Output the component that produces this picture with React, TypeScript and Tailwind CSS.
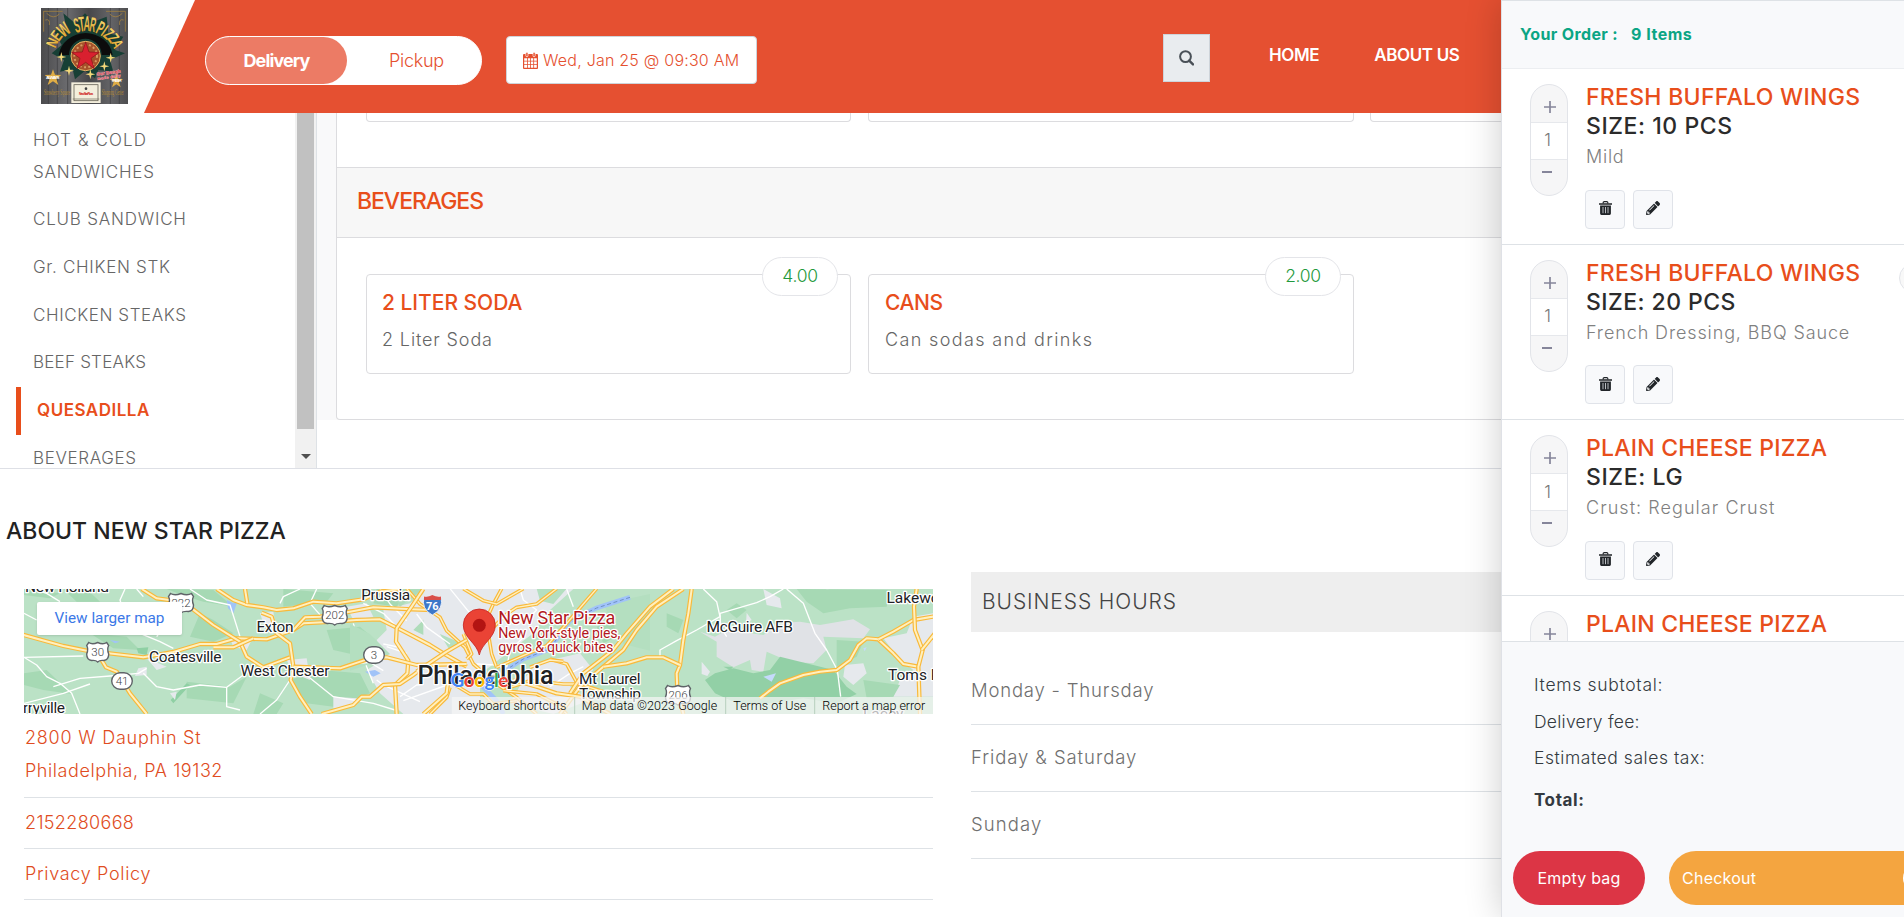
import { FaPencilAlt } from "react-icons/fa";

type RoadProps = { d: string; w?: number };

const WEST_HIGHWAYS = [
  "M60,192 L190,228 L260,242 L430,262 L520,246 L600,222 L650,222 L710,205 L800,208 L880,180 L910,160 L1000,155 L1070,150 L1140,148 L1200,178 L1290,225 L1330,250 L1400,290",
  "M425,57 L470,85 L545,95 L575,115 L640,165 L720,215",
  "M720,215 L740,260 L790,292 L870,262",
  "M650,57 L700,90 L740,105 L790,112 L830,120 L880,115 L940,95 L1010,100 L1090,88 L1140,65 L1200,57",
  "M785,128 L815,140 L830,190 L870,220 L880,290 L872,330 L900,380 L935,432",
  "M735,57 L742,100",
  "M300,262 L318,292 L350,305 L365,330 L390,370 L440,432",
  "M880,180 L915,142 L960,140 L1050,125 L1120,112 L1235,118 L1300,120",
  "M1270,57 L1235,110 L1190,175 L1188,215 L1225,272 L1222,310 L1185,345 L1190,432",
  "M965,432 L1060,405 L1085,380 L1110,380 L1150,345 L1200,342 L1240,315 L1260,300",
  "M880,290 L1020,295 L1110,265 L1160,262 L1250,285 L1400,282",
  "M1250,305 L1340,245 L1400,210",
  "M1345,330 L1340,370 L1270,432",
  "M640,232 L700,232 L760,205",
];
const CITY_HIGHWAYS = [
  "M170,14 L210,60 L270,100 L290,140 L345,190 L370,240 L440,300 L500,340 L560,390",
  "M340,150 L365,210 L350,225",
  "M455,14 L430,60 L412,100 L415,150 L425,210 L440,250",
  "M340,14 L400,50 L440,60 L520,14",
  "M440,250 L520,215 L590,185 L640,130 L700,60 L740,14",
  "M620,14 L560,60 L500,70 L470,90 L430,130",
  "M600,225 L650,240 L680,295 L720,310 L780,330",
  "M480,310 L540,290 L640,300 L690,300",
  "M460,320 L560,330 L620,360 L650,390",
  "M310,300 L360,330 L400,330 L430,360 L500,350",
  "M240,390 L290,340 L300,310",
  "M540,250 L600,228 L640,232",
];
const EAST_HIGHWAYS = [
  "M640,57 L560,110 L500,180 L460,240 L400,290 L330,350 L270,432",
  "M610,57 L540,110 L470,190 L430,240 L340,310 L300,370",
  "M665,57 L655,130 L640,210 L630,285 L620,310 L622,360 L640,432",
  "M400,290 L470,280 L530,262 L580,262 L630,285",
  "M870,385 L895,365 L930,340 L1000,315 L1050,305 L1100,300 L1140,270 L1165,225 L1190,205 L1225,208 L1270,250 L1300,282 L1345,290",
  "M1225,208 L1270,185 L1330,150 L1400,138",
  "M1340,57 L1332,110 L1335,180 L1358,240 L1345,290 L1350,432",
  "M1355,240 L1395,190",
  "M130,330 L200,350 L260,370 L330,380 L420,432",
];
const WEST_STREETS = [
  "M72,262 L250,258", "M72,262 L110,285 L140,320 L180,340 L215,370 L240,432", "M72,400 L190,370 L270,342",
  "M160,350 L240,325 L330,318 L415,310 L440,295", "M375,57 L360,90 L372,130 L420,190 L480,215 L520,235",
  "M545,120 L500,160 L470,200", "M430,310 L470,350 L520,360 L600,345 L680,352 L730,315",
  "M680,352 L680,410 L720,420", "M570,57 L620,90 L690,105 L720,200", "M780,432 L830,390 L870,330",
  "M900,300 L1000,380 L1120,400 L1185,420", "M840,100 L850,80 L900,57", "M950,57 L930,100 L965,140",
  "M1060,160 L1080,230 L1100,290 L1120,340", "M1130,330 L1150,345 L1260,395", "M1160,230 L1220,250", "M1200,380 L1250,345 L1400,330",
  "M100,57 L140,70 L180,95", "M72,130 L110,150", "M410,57 L430,80", "M1090,100 L1150,130 L1190,170",
];
const EAST_STREETS = [
  "M700,57 L740,95 L750,140 L680,180 L620,212 L570,240 L570,262", "M750,130 L860,98 L900,80 L940,57",
  "M950,57 L1000,100 L1035,190 L1070,240 L1102,300 L1112,380", "M750,130 L752,170 L770,200",
  "M150,57 L160,90 L200,120 L180,140", "M240,350 L300,310 L340,290", "M290,57 L310,110",
];
const CITY_STREETS = [
  "M90,14 L120,60 L170,110", "M200,90 L230,130 L300,180", "M160,350 L300,300", "M0,240 L60,235 L100,260",
  "M380,240 L470,245", "M100,180 L150,190", "M300,14 L370,100", "M520,160 L480,200 L470,250",
];

function Highway({ d, w = 10 }: RoadProps) {
  return (
    <g fill="none" strokeLinejoin="round">
      <path d={d} stroke="#f9b93a" strokeWidth={w + 1} />
      <path d={d} stroke="#fff0bf" strokeWidth={w - 6} />
    </g>
  );
}
function Street({ d }: RoadProps) {
  return <path d={d} fill="none" stroke="#fff" strokeWidth={4} strokeLinejoin="round" />;
}

type LabelProps = { x: number; y: number; len?: number; size?: number; color?: string; weight?: number; children: string };
function MapLabel({ x, y, len, size = 15.5, color = "#202124", weight = 400, children }: LabelProps) {
  return (
    <text x={x} y={y} textLength={len} fontSize={size} fill={color} fontWeight={weight} stroke="#fff" strokeWidth={2.6} strokeLinejoin="round" paintOrder="stroke">
      {children}
    </text>
  );
}
function UsShield({ x, y, n }: { x: number; y: number; n: string }) {
  const w = n.length > 2 ? 12.5 : 11;
  return (
    <g transform={`translate(${x} ${y})`}>
      <path
        d={`M${-w + 2},-9.5 Q${-w / 2},-7 0,-9.5 Q${w / 2},-7 ${w - 2},-9.5 L${w},-6.5 Q${w - 2},-3 ${w},2 Q${w},8 ${w - 5},8.5 Q2,8 0,10 Q-2,8 ${-w + 5},8.5 Q${-w},8 ${-w},2 Q${-w + 2},-3 ${-w},-6.5 Z`}
        fill="#fff" stroke="#5f6368" strokeWidth="1.4"
      />
      <text y="4.3" textAnchor="middle" fontSize="11.5" fill="#3c4043">{n}</text>
    </g>
  );
}
function RoundShield({ x, y, n }: { x: number; y: number; n: string }) {
  return (
    <g transform={`translate(${x} ${y})`}>
      <rect x="-10.3" y="-8.3" width="20.6" height="16.6" rx="8.3" fill="#fff" stroke="#5f6368" strokeWidth="1.4" />
      <text y="4.2" textAnchor="middle" fontSize="11.5" fill="#3c4043">{n}</text>
    </g>
  );
}

function MapView() {
  return (
    <svg width="909" height="125" viewBox="0 0 909 125" className="block font-['Roboto',sans-serif]">
      <rect width="909" height="125" fill="#bbe2c6" />
      <g transform="translate(-24 -19) scale(.33333)">
        <g fill="#a6d9b4">
          <path d="M72,57 L180,70 L150,85 L72,75 Z M190,57 L260,57 L300,95 L230,95 Z M570,200 L600,130 L640,150 L700,190 L640,215 Z M500,57 L640,60 L700,110 L610,95 L560,80 Z" />
          <path d="M72,310 L140,300 L215,372 L130,360 L72,345 Z M560,335 L690,350 L740,320 L700,400 L560,385 Z M850,57 L1000,70 L980,95 L850,110 Z M980,180 L1080,170 L1150,230 L1090,260 L1000,240 Z" />
          <path d="M870,330 L960,300 L1080,310 L1110,370 L1000,410 L920,400 Z M1130,57 L1230,57 L1190,110 L1120,100 Z M1230,170 L1290,130 L1330,175 L1290,200 Z M780,370 L850,400 L830,432 L760,432 Z M270,190 L380,200 L420,240 L340,235 Z" />
        </g>
        <path d="M410,235 L445,232 L440,255 L415,250 Z M560,340 L570,345 L520,400 L512,390 Z" fill="#8fd0a4" />
        <g fill="#e6e9ed">
          <path d="M1150,120 L1230,100 L1290,57 L1440,57 L1440,432 L1210,432 L1140,370 L1100,300 L1150,270 L1130,210 L1160,180 Z" />
          <path d="M690,205 L760,200 L740,240 L700,230 Z M415,295 L440,290 L440,315 L405,318 Z M440,265 L500,290 L470,300 Z M860,270 L920,265 L930,330 L880,310 Z M1040,110 L1100,100 L1120,140 L1060,150 Z M780,130 L820,125 L830,190 L790,160 Z M510,370 L530,365 L525,390 Z M1000,380 L1070,385 L1060,410 L1000,415 Z" />
        </g>
        <path d="M680,90 L700,100 L712,95 L700,130 L684,115 Z M1095,305 L1125,300 L1142,310 L1120,320 Z M330,210 L360,215 L345,220 Z" fill="#a0c3f8" />
        <path d="M1240,180 L1290,130 L1330,170 L1290,205 Z M1170,57 L1270,57 L1200,110 Z" fill="#aedcba" />
        {WEST_STREETS.map((d) => <Street key={d} d={d} />)}
      </g>
      <g transform="translate(446 -19) scale(.33333)">
        <g fill="#e6e9ed">
          <path d="M-140,57 L310,57 L240,120 L190,190 L110,250 L60,290 L0,330 L-60,432 L-140,432 Z" />
          <path d="M200,280 L330,250 L370,300 L300,350 L360,390 L250,432 L120,400 L160,330 Z M160,57 L230,57 L215,140 L160,110 Z" />
          <path d="M880,57 L930,85 L935,115 L890,105 Z M830,128 L845,150 L828,160 Z M1070,57 L1130,75 L1060,90 Z M1125,285 L1180,280 L1190,310 L1150,345 L1120,320 Z M695,275 L720,305 L712,318 L695,312 Z" />
          <path d="M1389,130 L1330,140 L1310,190 L1240,205 L1290,270 L1330,300 L1290,330 L1270,380 L1389,380 Z" />
        </g>
        <path d="M690,185 L735,200 L770,180 L880,195 L940,158 L990,155 L1050,165 L1150,148 L1200,178 L1180,205 L1060,200 L1070,240 L1030,280 L960,275 L890,245 L880,305 L845,300 L840,270 L790,292 L740,260 L740,215 Z" fill="#e0e2e6" />
        <g fill="#a6d9b4">
          <path d="M980,57 L1260,60 L1250,110 L1140,115 L1060,130 L1010,95 Z M590,130 L640,150 L625,190 L590,170 Z M380,170 L430,150 L440,200 L400,220 Z M770,120 L800,100 L830,120 L800,145 Z" />
          <path d="M1100,210 L1180,215 L1160,260 L1100,290 Z" />
        </g>
        <path d="M735,310 L790,295 L850,310 L900,300 L930,260 L1030,285 L1090,300 L1130,350 L1160,372 L1100,400 L1000,385 L900,400 L800,400 L735,370 L705,330 Z M760,290 L790,290 L780,300 Z" fill="#92d0a6" />
        <path d="M1180,330 L1290,345 L1270,380 L1190,385 Z" fill="#a6d9b4" />
        <path d="M880,320 L918,310 L905,335 Z M1180,235 L1190,232 L1184,244 Z" fill="#c5dafb" />
        {EAST_STREETS.map((d) => <Street key={d} d={d} />)}
      </g>
      <g transform="translate(326 -5) scale(.33333)">
        <path d="M0,14 L60,14 L30,40 L0,50 Z M0,120 L60,150 L120,210 L60,240 L0,260 Z M270,150 L340,180 L300,200 Z M560,14 L650,14 L610,60 L570,50 Z M760,60 L900,30 L900,200 L820,180 Z" fill="#b4dfc0" />
        <path d="M840,40 L740,72 L660,110 L630,150 L600,195 L520,225 L480,250 L450,260 M380,260 L400,310 L440,350 L460,390" fill="none" stroke="#a0c3f8" strokeWidth="14" />
        <path d="M840,40 L740,72 L660,110 L630,150 L600,195 L520,225 L480,250" fill="none" stroke="#6e8fc4" strokeWidth="3" strokeDasharray="12 8" />
        {CITY_STREETS.map((d) => <Street key={d} d={d} />)}
        {CITY_HIGHWAYS.map((d) => <Highway key={d} d={d} />)}
      </g>
      <g transform="translate(-24 -19) scale(.33333)">{WEST_HIGHWAYS.map((d) => <Highway key={d} d={d} w={12} />)}</g>
      <g transform="translate(446 -19) scale(.33333)">{EAST_HIGHWAYS.map((d) => <Highway key={d} d={d} w={12} />)}</g>

      <MapLabel x={1} y={2.7} len={84}>New Holland</MapLabel>
      <MapLabel x={337.2} y={11} len={49}>Prussia</MapLabel>
      <MapLabel x={232.5} y={43.2} len={37}>Exton</MapLabel>
      <MapLabel x={125} y={73} len={72.5}>Coatesville</MapLabel>
      <MapLabel x={216.5} y={86.5} len={89}>West Chester</MapLabel>
      <MapLabel x={-1} y={124} len={42}>rryville</MapLabel>
      <MapLabel x={682.5} y={42.5} len={86.5}>McGuire AFB</MapLabel>
      <MapLabel x={555} y={95} len={61.5}>Mt Laurel</MapLabel>
      <MapLabel x={555} y={110} len={62}>Township</MapLabel>
      <MapLabel x={862.5} y={14.4}>Lakewood</MapLabel>
      <MapLabel x={864} y={90.7}>Toms River</MapLabel>
      <MapLabel x={839} y={130}>Lacey</MapLabel>
      <MapLabel x={393.5} y={94.7} len={136} size={25} weight={500}>Philadelphia</MapLabel>
      <UsShield x={157} y={14} n="222" />
      <UsShield x={73.7} y={63} n="30" />
      <UsShield x={310.7} y={26} n="202" />
      <UsShield x={654} y={106} n="206" />
      <RoundShield x={98} y={92} n="41" />
      <RoundShield x={350} y={66} n="3" />
      <path d="M400,8 Q404,9 408.3,6.5 Q413,9 417,8 Q420,20 408.3,26 Q397,20 400,8 Z" fill="#3d78c9" stroke="#fff" strokeWidth=".8" />
      <path d="M400,11 V7.5 Q404,8.5 408.3,6 Q413,8.5 417,7.5 V11 Z" fill="#d9504a" />
      <text x="408.3" y="21" textAnchor="middle" fontSize="11" fontWeight="700" fill="#fff">76</text>

      <path d="M455.3,66 C453,54 439.3,49 439.3,36 A16,16 0 0 1 471.3,36 C471.3,49 457.6,54 455.3,66 Z" fill="#ea4335" stroke="#c5221f" strokeWidth=".8" />
      <circle cx="455.3" cy="36.3" r="6.5" fill="#b31412" />
      <MapLabel x={474.3} y={35} len={117} size={18} color="#b3181d">New Star Pizza</MapLabel>
      <MapLabel x={474.3} y={49.4} len={122} size={14.3} color="#b3181d">New York-style pies,</MapLabel>
      <MapLabel x={474.3} y={63.4} len={115} size={14.3} color="#b3181d">gyros &amp; quick bites</MapLabel>
      <text x="426.5" y="97.5" textLength="58" fontSize="19" fontWeight="700" stroke="#fff" strokeWidth="1.2" paintOrder="stroke" className="font-['Lato',sans-serif]">
        <tspan fill="#4285f4">G</tspan><tspan fill="#ea4335">o</tspan><tspan fill="#fbbc04">o</tspan><tspan fill="#4285f4">g</tspan><tspan fill="#34a853">l</tspan><tspan fill="#ea4335">e</tspan>
      </text>

      <rect x="427.7" y="108" width="482" height="17" fill="#f5f5f5" fillOpacity=".72" />
      <path d="M550.7,108 V125 M701.7,108 V125 M790.7,108 V125" stroke="#b7cfbd" strokeWidth="1" />
      <g fontSize="12.5" fill="#000">
        <text x="434.3" y="121" textLength="108">Keyboard shortcuts</text>
        <text x="557.7" y="121" textLength="135.5">Map data ©2023 Google</text>
        <text x="709.3" y="121" textLength="73">Terms of Use</text>
        <text x="798.3" y="121" textLength="103">Report a map error</text>
      </g>
    </svg>
  );
}

const ARCH: { c: string; x: number; y: number; r: number; h: number; w: number }[] = [
  { c: "N", x: 156, y: 128, r: -66, h: 46, w: 26 },
  { c: "E", x: 169, y: 106, r: -52, h: 50, w: 22 },
  { c: "W", x: 190, y: 88, r: -38, h: 58, w: 32 },
  { c: "S", x: 230, y: 75, r: -14, h: 62, w: 17 },
  { c: "T", x: 245, y: 71, r: -7, h: 64, w: 17 },
  { c: "A", x: 261, y: 70, r: 3, h: 64, w: 20 },
  { c: "R", x: 279, y: 73, r: 10, h: 62, w: 18 },
  { c: "P", x: 302, y: 83, r: 26, h: 58, w: 19 },
  { c: "I", x: 315, y: 91, r: 35, h: 55, w: 8 },
  { c: "Z", x: 327, y: 101, r: 43, h: 52, w: 20 },
  { c: "Z", x: 341, y: 114, r: 54, h: 49, w: 20 },
  { c: "A", x: 353, y: 131, r: 66, h: 46, w: 24 },
];

function Logo() {
  return (
    <svg width="87" height="96" viewBox="123 24 261 288" className="block">
      <defs>
        <linearGradient id="gold" x1="0" y1="0" x2="0" y2="1">
          <stop offset="0" stopColor="#f7de7c" /><stop offset="1" stopColor="#d9981f" />
        </linearGradient>
        <linearGradient id="wood" x1="0" y1="0" x2="1" y2="0">
          <stop offset="0" stopColor="#4b4b4d" /><stop offset=".3" stopColor="#6b6b6e" /><stop offset=".55" stopColor="#47474a" /><stop offset=".8" stopColor="#646467" /><stop offset="1" stopColor="#4e4e50" />
        </linearGradient>
      </defs>
      <rect x="123" y="24" width="261" height="288" fill="url(#wood)" />
      <path d="M145,24 V312 M172,24 V312 M203,24 V312 M331,24 V312 M358,24 V312" stroke="#3b3b3e" strokeWidth="2" />
      <path d="M130,34 H188 M131,34 V95 M136,60 q15,-5 12,15 M140,40 q20,20 38,2 M376,34 H318 M376,34 V95 M371,60 q-15,-5 -12,15 M367,40 q-20,20 -38,2" fill="none" stroke="#a07f41" strokeWidth="2.5" />
      <path d="M190,40 L225,70 L255,40 L280,65 L320,50 L325,100 L370,110 L345,150 L375,160 L330,180 L340,215 L295,210 L285,235 L255,212 L225,238 L218,208 L180,215 L192,180 L155,160 L185,135 L160,90 L200,90 Z" fill="#173f35" />
      <path d="M176,165 A82,78 0 0 1 338,165 L305,165 A48,48 0 0 0 207,165 Z" fill="#0c0c0c" />
      <circle cx="257" cy="168" r="44" fill="#a6522b" stroke="#e7b566" strokeWidth="3" />
      <circle cx="257" cy="168" r="34" fill="none" stroke="#d79b62" strokeWidth="6" strokeDasharray="6 7" />
      <path d="M257,126 L267,156 L298,157 L273,175 L283,206 L257,187 L231,206 L240,175 L215,157 L247,156 Z" fill="#d9202f" stroke="#8a101a" strokeWidth="2" />
      <g fill="url(#gold)" stroke="#2a1a08" strokeWidth="1" fontWeight="700" className="font-['Liberation_Sans',sans-serif]">
        {ARCH.map((l, i) => (
          <text key={i} transform={`translate(${l.x} ${l.y}) rotate(${l.r})`} x={-l.w / 2} y={l.h * 0.36} fontSize={l.h} textLength={l.w} lengthAdjust="spacingAndGlyphs" paintOrder="stroke">{l.c}</text>
        ))}
      </g>
      <g fill="#f4d97a">
        <path d="M184,156 l3,12 l12,3 l-12,3 l-3,12 l-3,-12 l-12,-3 l12,-3 Z M207,197 l3,12 l12,3 l-12,3 l-3,12 l-3,-12 l-12,-3 l12,-3 Z M313,184 l3,12 l12,3 l-12,3 l-3,12 l-3,-12 l-12,-3 l12,-3 Z M332,158 l3,12 l12,3 l-12,3 l-3,12 l-3,-12 l-12,-3 l12,-3 Z M271,208 l3,12 l12,3 l-12,3 l-3,12 l-3,-12 l-12,-3 l12,-3 Z" />
        <path d="M159,208 L165,224 L184,225 L169,236 L175,255 L159,244 L143,255 L149,236 L134,225 L153,224 Z M349,222 L354,236 L369,237 L357,246 L362,262 L349,253 L336,262 L341,246 L329,237 L344,236 Z" fill="#e0ad45" />
      </g>
      <g className="font-['Liberation_Sans',sans-serif]" fontWeight="700">
        <text x="138" y="238" fontSize="13" fill="#fff" textLength="40">ALWAYS</text>
        <text x="336" y="247" fontSize="12" fill="#fff" textLength="28">FRESH</text>
        <text x="290" y="222" fontSize="13" fill="#d8283a" stroke="#f3c9cd" strokeWidth="1.5" paintOrder="stroke" textLength="72" transform="rotate(-8 327 222)">Our Dough</text>
        <text x="292" y="235" fontSize="11" fill="#d8283a" stroke="#f3c9cd" strokeWidth="1.5" paintOrder="stroke" textLength="70" transform="rotate(-8 327 234)">made daily</text>
      </g>
      <g fontSize="25" fill="#b58a35" className="font-['Liberation_Serif',serif]">
        <text x="132" y="286" textLength="78" lengthAdjust="spacingAndGlyphs">Strawberry Square</text>
        <text x="305" y="286" textLength="66" lengthAdjust="spacingAndGlyphs">Shopping Center</text>
      </g>
      <rect x="214" y="247" width="88" height="62" fill="#f3eedc" />
      <rect x="222" y="254" width="72" height="48" fill="none" stroke="#6a6659" strokeWidth="2.5" />
      <circle cx="258" cy="266" r="4" fill="#444" />
      <text x="237" y="284" fontSize="10" fontWeight="700" fill="#d01a1a" textLength="42" className="font-['Liberation_Sans',sans-serif]">New Star Pizza</text>
      <path d="M218,297 H298" stroke="#6a6659" strokeWidth="2" />
    </svg>
  );
}

function CalendarIcon() {
  return (
    <svg width="15" height="17" viewBox="0 0 15 17" className="block shrink-0">
      <path d="M0,3 a1,1 0 0 1 1,-1 H14 a1,1 0 0 1 1,1 V16 a1,1 0 0 1 -1,1 H1 a1,1 0 0 1 -1,-1 Z" fill="#e5502f" />
      <path d="M1.2,6.2 H4 V8.8 H1.2 Z M4.8,6.2 H7.2 V8.8 H4.8 Z M8,6.2 H10.3 V8.8 H8 Z M11.1,6.2 H13.8 V8.8 H11.1 Z M1.2,9.6 H4 V12.2 H1.2 Z M4.8,9.6 H7.2 V12.2 H4.8 Z M8,9.6 H10.3 V12.2 H8 Z M11.1,9.6 H13.8 V12.2 H11.1 Z M1.2,13 H4 V15.8 H1.2 Z M4.8,13 H7.2 V15.8 H4.8 Z M8,13 H10.3 V15.8 H8 Z M11.1,13 H13.8 V15.8 H11.1 Z" fill="#fff" />
      <rect x="2.8" y=".3" width="2.2" height="4.4" rx="1.1" fill="#e5502f" stroke="#fff" strokeWidth=".7" />
      <rect x="10" y=".3" width="2.2" height="4.4" rx="1.1" fill="#e5502f" stroke="#fff" strokeWidth=".7" />
    </svg>
  );
}
function SearchIcon() {
  return (
    <svg width="15" height="16" viewBox="0 0 15 16" fill="none" stroke="#495057" className="block">
      <circle cx="6.5" cy="6.6" r="5.4" strokeWidth="2" />
      <path d="M10.2,10.6 L14,14.4" strokeWidth="2.4" strokeLinecap="round" />
    </svg>
  );
}
function TrashIcon() {
  return (
    <svg width="13" height="14" viewBox="0 0 13 14" className="block">
      <path d="M4.2,2.4 V1.6 Q4.2,.6 5.2,.6 H7.8 Q8.8,.6 8.8,1.6 V2.4" fill="none" stroke="#212529" strokeWidth="1.2" />
      <path d="M0,2.3 H13 V3.8 H0 Z M1.1,4.6 H11.9 V12.6 Q11.9,14 10.6,14 H2.4 Q1.1,14 1.1,12.6 Z" fill="#212529" />
      <path d="M4,6 V12.2 M6.5,6 V12.2 M9,6 V12.2" stroke="#b9bcc0" strokeWidth="1" />
    </svg>
  );
}

const CATEGORIES = [
  { name: "CLUB SANDWICH", cls: "tracking-[0.79px]" },
  { name: "Gr. CHIKEN STK", cls: "tracking-[0.69px]" },
  { name: "CHICKEN STEAKS", cls: "tracking-[0.59px]" },
  { name: "BEEF STEAKS", cls: "tracking-[0.22px]" },
];

function Sidebar() {
  return (
    <aside className="flex h-[355px] w-[317px] shrink-0 overflow-hidden border-r border-[#dee2e6]">
      <ul className="flex-1 pt-[4px] text-[17px] leading-[31.67px] font-[330] text-[#666]">
        <li className="py-2 pl-[33px]">
          <div className="tracking-[1.11px]">HOT &amp; COLD</div>
          <div className="tracking-[0.77px]">SANDWICHES</div>
        </li>
        {CATEGORIES.map((c) => (
          <li key={c.name} className={`py-2 pl-[33px] ${c.cls}`}>{c.name}</li>
        ))}
        <li className="ml-4 border-l-5 border-[#e84e1b] py-2 pl-[16px] font-semibold tracking-[0.5px] text-[#e84e1b]">QUESADILLA</li>
        <li className="py-2 pl-[33px] tracking-[0.63px]">BEVERAGES</li>
      </ul>
      <div className="flex w-[21px] flex-col items-center justify-between bg-[#f1f1f1]">
        <div className="h-[316px] w-[17px] bg-[#c1c1c1]" />
        <svg width="10" height="5" viewBox="0 0 10 5" className="mb-[9px]"><path d="M0,0 H10 L5,5 Z" fill="#505050" /></svg>
      </div>
    </aside>
  );
}

type ItemProps = { title: string; desc: string; price: string; cardCls: string; titleCls: string; descCls: string; priceCls: string };
function ItemCard({ title, desc, price, cardCls, titleCls, descCls, priceCls }: ItemProps) {
  return (
    <div className={`relative h-[100px] rounded border border-[#dcdcdf] pt-[12px] ${cardCls}`}>
      <div className={`text-[21px] leading-8 font-medium text-[#e84e1b] ${titleCls}`}>{title}</div>
      <div className={`mt-[5px] text-[18px] leading-8 font-[330] text-[#666] ${descCls}`}>{desc}</div>
      <div className={`absolute -top-[18px] flex h-[39px] w-[76px] items-center justify-center rounded-full border border-[#e4e5e9] bg-white text-[17.5px] font-[330] tracking-[-0.3px] text-[#1f9a3d] ${priceCls}`}>{price}</div>
    </div>
  );
}

function Menu() {
  return (
    <main className="h-[307px] flex-1 bg-[#f9f9fa] pl-[19px]">
      <div className="flex h-full flex-col rounded-b border border-t-0 border-[#dcdcdf] bg-white">
        <div className="flex h-[54px] items-start pl-[29px]">
          <div className="mr-[17px] h-[9px] w-[485px] rounded-b border border-t-0 border-[#dcdcdf]" />
          <div className="mr-[16px] h-[9px] w-[486px] rounded-b border border-t-0 border-[#dcdcdf]" />
          <div className="h-[9px] w-[486px] rounded-b border border-t-0 border-[#dcdcdf]" />
        </div>
        <div className="flex h-[71px] items-center border-y border-[#dcdcdf] bg-[#f7f7f7] pl-[20px]">
          <h2 className="mb-[2px] text-[23px] font-medium tracking-[-1.05px] text-[#e84e1b]">BEVERAGES</h2>
        </div>
        <div className="flex pt-[36px] pl-[29px]">
          <ItemCard title="2 LITER SODA" desc="2 Liter Soda" price="4.00" cardCls="mr-[17px] w-[485px] pl-[15px]" titleCls="tracking-[-0.02px]" descCls="tracking-[0.87px]" priceCls="right-[12px]" />
          <ItemCard title="CANS" desc="Can sodas and drinks" price="2.00" cardCls="w-[486px] pl-4" titleCls="tracking-[-0.43px]" descCls="tracking-[1.36px]" priceCls="right-[12px]" />
        </div>
      </div>
    </main>
  );
}

function Header() {
  return (
    <header className="flex h-[113px]">
      <div className="w-[144px] shrink-0 pt-2 pl-[41px]"><Logo /></div>
      <div className="flex flex-1 items-start bg-[#e55031] [clip-path:polygon(51px_0,100%_0,100%_100%,0_100%)]">
        <div className="mt-9 ml-[61px] flex h-[49px] w-[277px] rounded-full border border-white bg-white text-[18px]">
          <div className="flex w-[141px] items-center justify-center rounded-full bg-[#ec7b65] font-bold tracking-[-0.88px] text-white">Delivery</div>
          <div className="flex flex-1 items-center pl-[42px] font-light tracking-[-0.3px] text-[#e5502f]">Pickup</div>
        </div>
        <div className="mt-9 ml-[24px] flex h-12 w-[251px] items-center rounded border border-[#ced4da] bg-white pl-4 text-[16px] font-[330] tracking-[0.22px] whitespace-nowrap text-[#e5502f]">
          <span className="mt-[1px]"><CalendarIcon /></span>
          <span className="mb-[1px] ml-[5px]">Wed, Jan 25 @ 09:30 AM</span>
        </div>
        <div className="mt-[34px] ml-[406px] flex h-12 w-[47px] items-center justify-center border border-[#ced4da] bg-[#e9ecef]"><SearchIcon /></div>
        <nav className="mt-[39px] ml-[59px] flex text-[17px] leading-8 font-semibold text-white">
          <span className="tracking-[-0.4px]">HOME</span>
          <span className="ml-[55px] tracking-[-0.35px]">ABOUT US</span>
        </nav>
      </div>
    </header>
  );
}

function Footer() {
  return (
    <footer className="h-[449px] border-t border-[#dee0e6]">
      <h2 className="pt-[46px] pl-[6px] text-[23px] leading-[32px] font-medium tracking-[0.01px] text-[#222]">ABOUT NEW STAR PIZZA</h2>
      <div className="flex pt-px">
        <div className="ml-6 w-[909px] pt-[41px] text-[18px] font-[330] text-[#e04c22]">
          <div className="relative h-[125px]">
            <MapView />
            <div className="absolute top-[13px] left-[13px] flex h-[33px] w-[145px] items-center justify-center rounded-xs bg-white font-['Roboto',sans-serif] text-[15.3px] font-normal text-[#3b78e7] shadow-sm">View larger map</div>
          </div>
          <div className="h-[84px] border-b border-[#dee2e6] pt-[7px] pl-px leading-[33px]">
            <div className="tracking-[0.77px]">2800 W Dauphin St</div>
            <div className="tracking-[0.57px]">Philadelphia, PA 19132</div>
          </div>
          <div className="h-[51px] border-b border-[#dee2e6] pl-px leading-[49px] tracking-[0.35px]">2152280668</div>
          <div className="h-[51px] border-b border-[#dee2e6] pl-px leading-[49px] tracking-[0.68px]">Privacy Policy</div>
        </div>
        <div className="ml-[38px] flex-1 pt-[24px] text-[18.5px] font-[330] text-[#707070]">
          <div className="h-[60px] bg-[#eee] pl-[11px] text-[21px] leading-[60px] font-light tracking-[0.9px] text-[#444]">BUSINESS HOURS</div>
          <div className="mt-[26px] h-[67px] border-b border-[#dee2e6] leading-[65px] tracking-[0.8px]">Monday - Thursday</div>
          <div className="h-[67px] border-b border-[#dee2e6] leading-[65px] tracking-[0.92px]">Friday &amp; Saturday</div>
          <div className="h-[67px] border-b border-[#dee2e6] leading-[65px] tracking-[1.1px]">Sunday</div>
        </div>
      </div>
    </footer>
  );
}

type OrderProps = { title: string; size: string; desc: string; titleCls: string; sizeCls: string; descCls: string; peek?: boolean };
const ORDERS: OrderProps[] = [
  { title: "FRESH BUFFALO WINGS", size: "SIZE: 10 PCS", desc: "Mild", titleCls: "tracking-[0.29px]", sizeCls: "tracking-[0.56px]", descCls: "tracking-[0.75px]" },
  { title: "FRESH BUFFALO WINGS", size: "SIZE: 20 PCS", desc: "French Dressing, BBQ Sauce", titleCls: "tracking-[0.29px]", sizeCls: "tracking-[0.45px]", descCls: "tracking-[0.88px]", peek: true },
  { title: "PLAIN CHEESE PIZZA", size: "SIZE: LG", desc: "Crust: Regular Crust", titleCls: "tracking-[0.22px]", sizeCls: "tracking-[0.6px]", descCls: "tracking-[1.05px]" },
  { title: "PLAIN CHEESE PIZZA", size: "SIZE: LG", desc: "Crust: Regular Crust", titleCls: "tracking-[0.22px]", sizeCls: "tracking-[0.6px]", descCls: "tracking-[1.05px]" },
];

function OrderRow({ o }: { o: OrderProps }) {
  return (
    <div className="relative flex h-[175.67px] shrink-0 border-b border-[#dee2e6] pt-[15px] pl-[28px]">
      <div className="flex h-[112px] w-[38px] shrink-0 flex-col overflow-hidden rounded-full border border-[#e2e4e9] bg-[#f6f6f7]">
        <div className="flex h-[37px] items-center justify-center pt-[7px] pl-[2px]">
          <svg width="12" height="12" viewBox="0 0 12 12"><path d="M6,0 V12 M0,6 H12" stroke="#85859a" strokeWidth="1.7" /></svg>
        </div>
        <div className="flex h-[38px] items-center justify-center border-y border-[#e6e8ec] bg-white pr-[3px] text-[17px] font-light text-[#777]">1</div>
        <div className="flex flex-1 items-start justify-center pt-[11px] pr-[4px]">
          <svg width="10" height="2" viewBox="0 0 10 2"><path d="M0,1 H10" stroke="#85859a" strokeWidth="1.8" /></svg>
        </div>
      </div>
      <div className="ml-[17px] pt-[-2px] whitespace-nowrap">
        <div className={`mt-[-1px] pl-px text-[23px] leading-[29px] font-medium text-[#e84e1b] ${o.titleCls}`}>{o.title}</div>
        <div className={`pl-px text-[23px] leading-[29px] font-medium text-[#2b2b2b] ${o.sizeCls}`}>{o.size}</div>
        <div className={`pl-px text-[18px] leading-[32px] font-[330] text-[#808080] ${o.descCls}`}>{o.desc}</div>
        <div className="mt-[16.5px] flex gap-2">
          <div className="flex h-[39px] w-10 items-center justify-center rounded border border-[#e0e3e9] bg-[#f8f9fb] pb-[2px]"><TrashIcon /></div>
          <div className="flex h-[39px] w-10 items-center justify-center rounded border border-[#e0e3e9] bg-[#f8f9fb] pb-[2px]"><FaPencilAlt size={14} color="#212529" /></div>
        </div>
      </div>
      {o.peek && <div className="absolute top-[18px] left-[397px] h-[30px] w-[60px] rounded-full border border-[#e2e4e9] bg-[#f8f8f8]" />}
    </div>
  );
}

function OrderDrawer() {
  return (
    <section className="absolute top-0 left-[1501px] flex h-[917px] w-[403px] flex-col overflow-visible border-l border-[#dfe1e6] bg-white shadow-[0_0_34px_rgba(0,0,0,0.2)]">
      <div className="flex h-[69px] shrink-0 items-center border-y border-t-[#dee2e6] border-b-[#eceef1] bg-[#f8f9fb] pb-px pl-[18px] text-[16px] font-bold text-[#0ba584]">
        <span className="tracking-[0.36px]">Your Order :</span>
        <span className="ml-[13px] tracking-[0.5px]">9 Items</span>
      </div>
      <div className="flex h-[572px] shrink-0 flex-col overflow-hidden">
        {ORDERS.map((o, i) => <OrderRow key={i} o={o} />)}
      </div>
      <div className="flex flex-1 flex-col overflow-hidden border-t border-[#dee2e6] bg-[#f8f9fb]">
        <div className="pt-[25px] pl-[32px] text-[17.5px] leading-[36.5px] font-[330] text-[#343a40]">
          <div className="tracking-[0.7px]">Items subtotal:</div>
          <div className="tracking-[0.25px]">Delivery fee:</div>
          <div className="tracking-[0.55px]">Estimated sales tax:</div>
          <div className="mt-[5px] text-[17px] font-bold tracking-[0.6px]">Total:</div>
        </div>
        <div className="mt-[33px] flex pl-[11px] text-[16px] font-normal text-white">
          <div className="flex h-[54px] w-[132px] shrink-0 items-center justify-center rounded-full bg-[#dc3545] pb-px tracking-[0.22px]">Empty bag</div>
          <div className="relative ml-6 flex h-[54px] w-[300px] shrink-0 items-center rounded-l-full bg-[#f4a540] pb-px pl-[13px] tracking-[0.24px]">
            Checkout
            <div className="absolute top-[13px] left-[234px] h-[28px] w-[40px] rounded-full bg-white" />
          </div>
        </div>
      </div>
    </section>
  );
}

export default function App() {
  return (
    <div className="relative h-[917px] w-[1904px] overflow-hidden bg-white font-['Inter',sans-serif]">
      <Header />
      <div className="flex h-[355px] items-start"><Sidebar /><Menu /></div>
      <Footer />
      <OrderDrawer />
    </div>
  );
}
